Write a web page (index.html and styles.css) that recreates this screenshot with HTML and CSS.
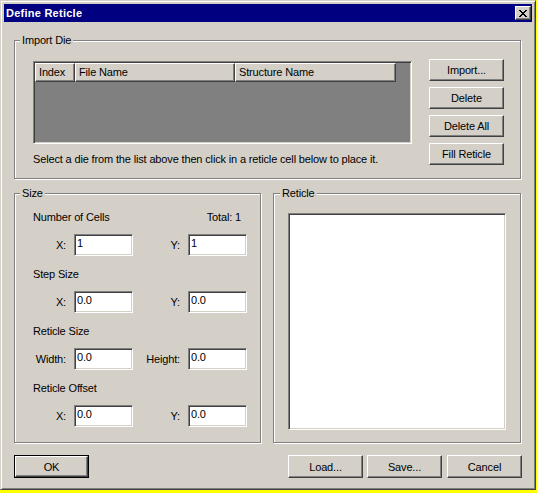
FILE: index.html
```html
<!DOCTYPE html>
<html>
<head>
<meta charset="utf-8">
<title>Define Reticle</title>
<link rel="stylesheet" href="styles.css">
</head>
<body>
<div class="window">
  <div class="titlebar">
    <span class="title">Define Reticle</span>
    <button class="close" aria-label="Close">
      <svg width="8" height="7" viewBox="0 0 8 7"><path fill="#000" d="M0 0h2v1h-2zM6 0h2v1h-2zM1 1h2v1h-2zM5 1h2v1h-2zM2 2h4v1h-4zM3 3h2v1h-2zM2 4h4v1h-4zM1 5h2v1h-2zM5 5h2v1h-2zM0 6h2v1h-2zM6 6h2v1h-2z"/></svg>
    </button>
  </div>
  <div class="client">
    <fieldset class="group import">
      <legend>Import Die</legend>
      <div class="import-body">
        <div class="import-left">
          <div class="listview">
            <div class="lv-header">
              <div class="lv-col c-index">Index</div>
              <div class="lv-col c-file">File Name</div>
              <div class="lv-col c-struct">Structure Name</div>
            </div>
          </div>
          <p class="hint">Select a die from the list above then click in a reticle cell below to place it.</p>
        </div>
        <div class="import-buttons">
          <button class="btn">Import...</button>
          <button class="btn">Delete</button>
          <button class="btn">Delete All</button>
          <button class="btn">Fill Reticle</button>
        </div>
      </div>
    </fieldset>

    <div class="middle">
      <fieldset class="group size">
        <legend>Size</legend>
        <div class="section">
          <div class="section-label"><span>Number of Cells</span><span class="total">Total: 1</span></div>
          <div class="field-row">
            <label>X:</label><input class="field" value="1">
            <label>Y:</label><input class="field" value="1">
          </div>
        </div>
        <div class="section">
          <div class="section-label"><span>Step Size</span></div>
          <div class="field-row">
            <label>X:</label><input class="field" value="0.0">
            <label>Y:</label><input class="field" value="0.0">
          </div>
        </div>
        <div class="section">
          <div class="section-label"><span>Reticle Size</span></div>
          <div class="field-row">
            <label>Width:</label><input class="field" value="0.0">
            <label>Height:</label><input class="field" value="0.0">
          </div>
        </div>
        <div class="section">
          <div class="section-label"><span>Reticle Offset</span></div>
          <div class="field-row">
            <label>X:</label><input class="field" value="0.0">
            <label>Y:</label><input class="field" value="0.0">
          </div>
        </div>
      </fieldset>

      <fieldset class="group reticle">
        <legend>Reticle</legend>
        <div class="canvas"></div>
      </fieldset>
    </div>

    <div class="footer">
      <div class="default-wrap"><button class="btn btn-footer">OK</button></div>
      <button class="btn btn-footer load">Load...</button>
      <button class="btn btn-footer save">Save...</button>
      <button class="btn btn-footer">Cancel</button>
    </div>
  </div>
</div>
</body>
</html>
```
FILE: styles.css
```css
* { box-sizing: border-box; }

body {
  margin: 0;
  background: #ffff00;
  font-family: "Liberation Sans", Arial, sans-serif;
  font-size: 11px;
  letter-spacing: -0.15px;
  color: #000;
}

.window {
  width: 536px;
  height: 490px;
  background: #d4d0c8;
  border: 1px solid;
  border-color: #d4d0c8 #404040 #404040 #d4d0c8;
  box-shadow: inset 1px 1px #fff, inset -1px -1px #808080;
  padding: 3px;
  display: flex;
  flex-direction: column;
}

.titlebar {
  height: 18px;
  background: #000080;
  color: #fff;
  display: flex;
  align-items: center;
  padding-left: 2px;
}

.title {
  font-weight: bold;
  font-size: 11px;
  letter-spacing: 0.25px;
  flex: 1;
}

.close {
  width: 16px;
  height: 14px;
  margin-right: 1px;
  padding: 0;
  background: #d4d0c8;
  border: 1px solid;
  border-color: #fff #404040 #404040 #fff;
  box-shadow: inset -1px -1px #808080;
  display: flex;
  align-items: center;
  justify-content: center;
}

.close svg { display: block; }

.client {
  flex: 1;
  padding: 12px 10px 0 10px;
  display: flex;
  flex-direction: column;
}

.group {
  margin: 0;
  border: 1px solid #808080;
  box-shadow: inset 1px 1px #fff, 1px 1px #fff;
  min-width: 0;
}

.group legend {
  padding: 0 2px;
  line-height: 13px;
  background: #d4d0c8;
}

.import {
  margin-right: 1px;
  padding: 12px 16px 12px 18px;
}

.import legend { margin-left: -13px; }

.import-body {
  display: flex;
  gap: 17px;
}

.import-left { flex: 1; }

.listview {
  margin-top: 2px;
  height: 83px;
  border: 1px solid;
  border-color: #808080 #fff #fff #808080;
  box-shadow: inset 1px 1px #404040, inset -1px -1px #d4d0c8;
  background: #808080;
  padding: 1px;
}

.lv-header {
  display: flex;
  height: 19px;
}

.lv-col {
  border: 1px solid;
  border-color: #fff #404040 #404040 #fff;
  box-shadow: inset -1px -1px #808080;
  background: #d4d0c8;
  padding-left: 3px;
  line-height: 16px;
  white-space: nowrap;
}

.c-index { width: 40px; }
.c-file { width: 160px; }
.c-struct { width: 161px; }

.hint {
  margin: 9px 0 0 0;
  line-height: 13px;
}

.import-buttons {
  width: 75px;
  display: flex;
  flex-direction: column;
  gap: 6px;
}

.btn {
  font-family: inherit;
  font-size: 11px;
  letter-spacing: -0.15px;
  color: #000;
  width: 75px;
  height: 22px;
  padding: 0;
  background: #d4d0c8;
  border: 1px solid;
  border-color: #fff #404040 #404040 #fff;
  box-shadow: inset -1px -1px #808080;
}

.middle {
  display: flex;
  margin-top: 8px;
}

.size {
  flex: 0 0 247px;
  margin-right: 12px;
  padding: 11px 13px 15px 18px;
}

.size legend { margin-left: -13px; }

.section + .section { margin-top: 12px; }

.section-label {
  display: flex;
  justify-content: space-between;
  line-height: 13px;
}

.total { padding-right: 6px; }

.field-row {
  display: grid;
  grid-template-columns: 41px 59px 55px 59px;
  align-items: center;
  margin-top: 10px;
}

.field-row label {
  text-align: right;
  padding-right: 8px;
}

.field {
  width: 59px;
  height: 22px;
  font-family: inherit;
  font-size: 11px;
  letter-spacing: -0.15px;
  color: #000;
  background: #fff;
  border: 1px solid;
  border-color: #808080 #fff #fff #808080;
  box-shadow: inset 1px 1px #404040, inset -1px -1px #d4d0c8;
  padding: 0 1px 4px 2px;
  outline: none;
}

.reticle {
  flex: 1;
  margin-right: 1px;
  padding: 13px 14px 12px 14px;
  display: flex;
  flex-direction: column;
}

.reticle legend { margin-left: -8px; }

.canvas {
  flex: 1;
  background: #fff;
  border: 1px solid;
  border-color: #808080 #fff #fff #808080;
  box-shadow: inset 1px 1px #404040, inset -1px -1px #d4d0c8;
}

.footer {
  display: flex;
  margin-top: 12px;
}

.btn-footer { height: 23px; }

.default-wrap {
  border: 1px solid #000;
  margin-right: auto;
  display: flex;
}

.default-wrap .btn-footer {
  width: 73px;
  height: 21px;
}

.load { margin-right: 4px; }
.save { margin-right: 5px; }
```
